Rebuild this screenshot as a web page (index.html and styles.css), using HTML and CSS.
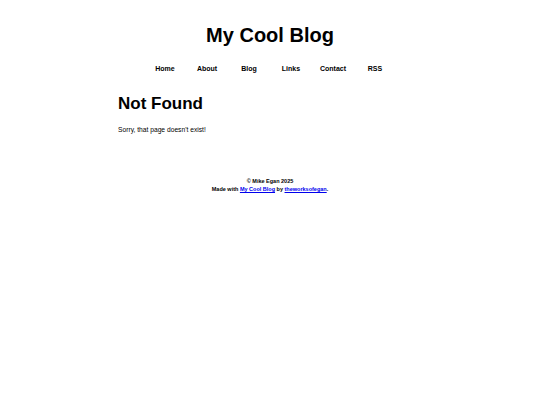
FILE: index.html
```html
<!DOCTYPE html>
<html>
<head>
<meta charset="utf-8">
<link rel="stylesheet" href="styles.css">
</head>
<body>
<div class="page">
  <header class="header">
    <h1 class="title">My Cool Blog</h1>
    <nav class="nav">
      <a class="nav-item" href="#">Home</a>
      <a class="nav-item" href="#">About</a>
      <a class="nav-item" href="#">Blog</a>
      <a class="nav-item" href="#">Links</a>
      <a class="nav-item" href="#">Contact</a>
      <a class="nav-item" href="#">RSS</a>
    </nav>
  </header>
  <main class="main">
    <h2 class="heading">Not Found</h2>
    <p class="text">Sorry, that page doesn't exist!</p>
  </main>
  <footer class="footer">
    <div>© Mike Egan 2025</div>
    <div>Made with <a class="link" href="#">My Cool Blog</a> by <a class="link" href="#">theworksofegan</a>.</div>
  </footer>
</div>
</body>
</html>
```
FILE: styles.css
```css
html, body {
  margin: 0;
  padding: 0;
  background: #fff;
}
body {
  font-family: "Liberation Sans", Arial, sans-serif;
  color: #000;
}
.page {
  width: 304px;
  margin: 0 auto;
  padding-top: 23px;
}
.header {
  display: flex;
  flex-direction: column;
  align-items: center;
}
.title {
  margin: 0;
  font-size: 20px;
  line-height: 24px;
  font-weight: bold;
}
.nav {
  display: grid;
  grid-template-columns: repeat(6, 42px);
  margin-top: 17px;
}
.nav-item {
  text-align: center;
  font-size: 7px;
  font-weight: bold;
  color: #000;
  text-decoration: none;
  line-height: 10px;
}
.main {
  margin-top: 19.7px;
}
.heading {
  margin: 0;
  font-size: 17px;
  line-height: 20px;
  font-weight: bold;
}
.text {
  margin: 12.2px 0 0;
  font-size: 6.7px;
  line-height: 8px;
}
.footer {
  margin-top: 43.3px;
  text-align: center;
  font-size: 5.5px;
  font-weight: bold;
  line-height: 8px;
}
.link {
  color: #00e;
  text-decoration: underline;
}
```
